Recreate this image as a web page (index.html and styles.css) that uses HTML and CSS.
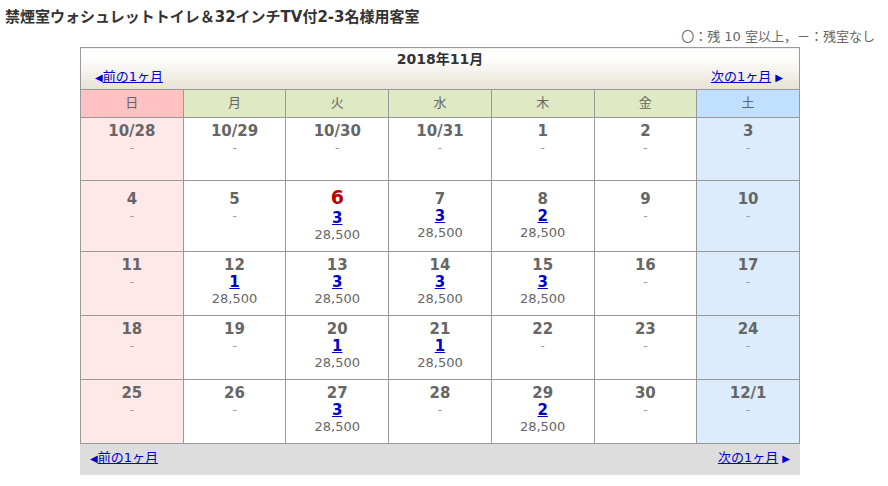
FILE: index.html
```html
<!DOCTYPE html>
<html lang="ja">
<head>
  <meta charset="UTF-8" />
  <meta name="viewport" content="width=device-width, initial-scale=1.0"/>
  <title>空室カレンダー</title>
  <link rel="stylesheet" href="styles.css">
</head>
<body>
  <div class="page">
    <h1>禁煙室ウォシュレットトイレ＆32インチTV付2-3名様用客室</h1>
    <div class="legend">〇：残 10 室以上，－：残室なし</div>

    <table class="cal">
      <thead>
        <tr>
          <th colspan="7" class="head">
            <div class="month">2018年11月</div>
            <div class="nav">
              <span><span class="arr">◀</span><a href="#">前の1ヶ月</a></span>
              <span><a href="#">次の1ヶ月</a> <span class="arr">▶</span></span>
            </div>
          </th>
        </tr>
        <tr class="week">
          <th class="sun">日</th>
          <th>月</th>
          <th>火</th>
          <th>水</th>
          <th>木</th>
          <th>金</th>
          <th class="sat">土</th>
        </tr>
      </thead>
      <tbody>
        <tr>
          <td class="sun"><div class="num">10/28</div><div class="none">-</div></td>
          <td><div class="num">10/29</div><div class="none">-</div></td>
          <td><div class="num">10/30</div><div class="none">-</div></td>
          <td><div class="num">10/31</div><div class="none">-</div></td>
          <td><div class="num">1</div><div class="none">-</div></td>
          <td><div class="num">2</div><div class="none">-</div></td>
          <td class="sat"><div class="num">3</div><div class="none">-</div></td>
        </tr>
        <tr>
          <td class="sun"><div class="num">4</div><div class="none">-</div></td>
          <td><div class="num">5</div><div class="none">-</div></td>
          <td><div class="num today">6</div><div class="rest"><a href="#">3</a></div><div class="price">28,500</div></td>
          <td><div class="num">7</div><div class="rest"><a href="#">3</a></div><div class="price">28,500</div></td>
          <td><div class="num">8</div><div class="rest"><a href="#">2</a></div><div class="price">28,500</div></td>
          <td><div class="num">9</div><div class="none">-</div></td>
          <td class="sat"><div class="num">10</div><div class="none">-</div></td>
        </tr>
        <tr>
          <td class="sun"><div class="num">11</div><div class="none">-</div></td>
          <td><div class="num">12</div><div class="rest"><a href="#">1</a></div><div class="price">28,500</div></td>
          <td><div class="num">13</div><div class="rest"><a href="#">3</a></div><div class="price">28,500</div></td>
          <td><div class="num">14</div><div class="rest"><a href="#">3</a></div><div class="price">28,500</div></td>
          <td><div class="num">15</div><div class="rest"><a href="#">3</a></div><div class="price">28,500</div></td>
          <td><div class="num">16</div><div class="none">-</div></td>
          <td class="sat"><div class="num">17</div><div class="none">-</div></td>
        </tr>
        <tr>
          <td class="sun"><div class="num">18</div><div class="none">-</div></td>
          <td><div class="num">19</div><div class="none">-</div></td>
          <td><div class="num">20</div><div class="rest"><a href="#">1</a></div><div class="price">28,500</div></td>
          <td><div class="num">21</div><div class="rest"><a href="#">1</a></div><div class="price">28,500</div></td>
          <td><div class="num">22</div><div class="none">-</div></td>
          <td><div class="num">23</div><div class="none">-</div></td>
          <td class="sat"><div class="num">24</div><div class="none">-</div></td>
        </tr>
        <tr>
          <td class="sun"><div class="num">25</div><div class="none">-</div></td>
          <td><div class="num">26</div><div class="none">-</div></td>
          <td><div class="num">27</div><div class="rest"><a href="#">3</a></div><div class="price">28,500</div></td>
          <td><div class="num">28</div><div class="none">-</div></td>
          <td><div class="num">29</div><div class="rest"><a href="#">2</a></div><div class="price">28,500</div></td>
          <td><div class="num">30</div><div class="none">-</div></td>
          <td class="sat"><div class="num">12/1</div><div class="none">-</div></td>
        </tr>
      </tbody>
    </table>

    <div class="foot">
      <span><span class="arr">◀</span><a href="#">前の1ヶ月</a></span>
      <span><a href="#">次の1ヶ月</a> <span class="arr">▶</span></span>
    </div>
  </div>
</body>
</html>
```

FILE: styles.css
```css
body {
  margin: 0;
  font-family: "DejaVu Sans", "Noto Sans CJK JP", sans-serif;
  color: #333;
  background: #fff;
}
.page {
  width: 880px;
  padding: 0 5px;
  box-sizing: border-box;
}
h1 {
  margin: 0;
  padding-top: 8px;
  font-size: 15px;
  line-height: 18px;
  font-weight: bold;
  color: #333;
}
.legend {
  margin-top: 3px;
  height: 16px;
  text-align: right;
  font-size: 13px;
  line-height: 16px;
  color: #666;
}
a {
  color: #0000cc;
}
.arr {
  font-size: 10px;
  color: #0000cc;
}
.cal {
  width: 720px;
  margin: 2px auto 0;
  border-collapse: collapse;
  table-layout: fixed;
}
.cal th,
.cal td {
  border: 1px solid #999;
  text-align: center;
}
.head {
  height: 36px;
  padding: 2px 0 3px;
  background: linear-gradient(#fff, #fff 20%, #e7e2d4);
}
.month {
  height: 18px;
  font-size: 14px;
  line-height: 18px;
  font-weight: bold;
  color: #333;
}
.nav {
  height: 18px;
  display: flex;
  justify-content: space-between;
  align-items: center;
  padding: 0 16px 0 14px;
  font-size: 13px;
  line-height: 18px;
  font-weight: normal;
}
.week th {
  height: 16px;
  padding: 5px 0 6px;
  font-size: 13px;
  line-height: 16px;
  font-weight: normal;
  color: #666;
  background: #dfe9c4;
}
.week th.sun {
  background: #ffc1c1;
}
.week th.sat {
  background: #c1dfff;
}
.cal td {
  height: 50px;
  padding: 4px 2px 8px;
  vertical-align: baseline;
  background: #fff;
}
.cal td.sun {
  background: #ffe8e8;
}
.cal td.sat {
  background: #dcecfc;
}
.num {
  font-size: 15px;
  line-height: 18px;
  font-weight: bold;
  color: #666;
}
.num.today {
  font-size: 19px;
  line-height: 25px;
  color: #bb0000;
}
.rest {
  font-size: 15px;
  line-height: 17px;
  font-weight: bold;
}
.price {
  font-size: 13px;
  line-height: 16px;
  color: #666;
}
.none {
  font-size: 12px;
  line-height: 16px;
  color: #999;
}
.foot {
  width: 720px;
  height: 31px;
  margin: 0 auto;
  display: flex;
  justify-content: space-between;
  align-items: flex-start;
  padding: 5px 10px 0;
  box-sizing: border-box;
  background: #ddd;
  font-size: 13px;
  line-height: 18px;
}
```
